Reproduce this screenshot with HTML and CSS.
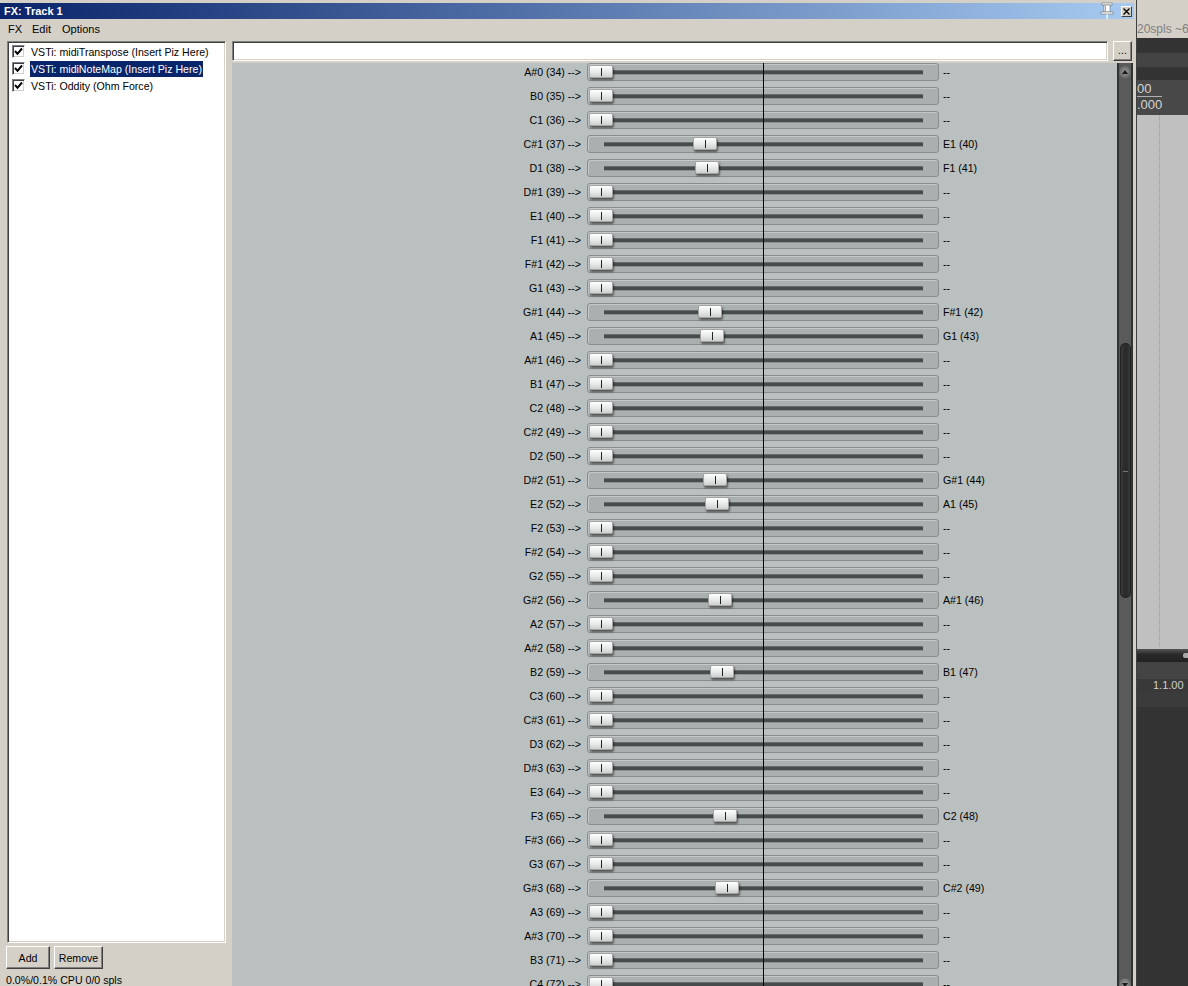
FILE: index.html
```html
<!DOCTYPE html>
<html>
<head>
<meta charset="utf-8">
<title>FX: Track 1</title>
<link rel="stylesheet" href="styles.css">
</head>
<body>
<div class="screen">
  <div class="window">
    <div class="titlebar">
      <span class="title">FX: Track 1</span>
      <svg class="pin" width="14" height="17" viewBox="0 0 14 17">
        <rect x="2" y="1" width="10" height="2" fill="#fff" stroke="#555" stroke-width="0.5"/>
        <rect x="4" y="3" width="6" height="7" fill="#fff" stroke="#555" stroke-width="0.5"/>
        <line x1="5.5" y1="3.5" x2="5.5" y2="9.5" stroke="#9ab" stroke-width="1"/>
        <rect x="1" y="10" width="12" height="2" fill="#fff" stroke="#555" stroke-width="0.5"/>
        <rect x="6.5" y="12" width="1.2" height="5" fill="#fff"/>
      </svg>
      <span class="closebtn">
        <svg width="7" height="7" viewBox="0 0 7 7"><path d="M0.5 0.5 L6.5 6.5 M6.5 0.5 L0.5 6.5" stroke="#000" stroke-width="1.3"/></svg>
      </span>
    </div>
    <div class="menubar">
      <span class="menu m-fx">FX</span>
      <span class="menu m-edit">Edit</span>
      <span class="menu">Options</span>
    </div>
    <div class="body">
      <div class="left">
        <div class="fxlist">
          <div class="fxitem"><span class="chk"><svg width="9" height="9" viewBox="0 0 9 9"><path d="M1 4 L3.5 6.8 L8 1.5" fill="none" stroke="#000" stroke-width="2"/></svg></span><span class="fxname">VSTi: midiTranspose (Insert Piz Here)</span></div>
          <div class="fxitem"><span class="chk"><svg width="9" height="9" viewBox="0 0 9 9"><path d="M1 4 L3.5 6.8 L8 1.5" fill="none" stroke="#000" stroke-width="2"/></svg></span><span class="fxname sel">VSTi: midiNoteMap (Insert Piz Here)</span></div>
          <div class="fxitem"><span class="chk"><svg width="9" height="9" viewBox="0 0 9 9"><path d="M1 4 L3.5 6.8 L8 1.5" fill="none" stroke="#000" stroke-width="2"/></svg></span><span class="fxname">VSTi: Oddity (Ohm Force)</span></div>
        </div>
        <div class="buttons">
          <span class="btn btn-add">Add</span>
          <span class="btn btn-remove">Remove</span>
        </div>
        <div class="status">0.0%/0.1% CPU 0/0 spls</div>
      </div>
      <div class="right">
        <div class="toprow">
          <div class="input"></div>
          <div class="dots">...</div>
        </div>
        <div class="pluginwrap">
          <div class="plugin">
            <div class="rows">
              <div class="row"><span class="lbl">A#0 (34) --&gt;</span><div class="slot"><div class="box"><div class="track"></div><div class="thumb" style="left:1px"></div></div></div><span class="out">--</span></div>
              <div class="row"><span class="lbl">B0 (35) --&gt;</span><div class="slot"><div class="box"><div class="track"></div><div class="thumb" style="left:1px"></div></div></div><span class="out">--</span></div>
              <div class="row"><span class="lbl">C1 (36) --&gt;</span><div class="slot"><div class="box"><div class="track"></div><div class="thumb" style="left:1px"></div></div></div><span class="out">--</span></div>
              <div class="row"><span class="lbl">C#1 (37) --&gt;</span><div class="slot"><div class="box"><div class="track"></div><div class="thumb" style="left:105px"></div></div></div><span class="out">E1 (40)</span></div>
              <div class="row"><span class="lbl">D1 (38) --&gt;</span><div class="slot"><div class="box"><div class="track"></div><div class="thumb" style="left:107px"></div></div></div><span class="out">F1 (41)</span></div>
              <div class="row"><span class="lbl">D#1 (39) --&gt;</span><div class="slot"><div class="box"><div class="track"></div><div class="thumb" style="left:1px"></div></div></div><span class="out">--</span></div>
              <div class="row"><span class="lbl">E1 (40) --&gt;</span><div class="slot"><div class="box"><div class="track"></div><div class="thumb" style="left:1px"></div></div></div><span class="out">--</span></div>
              <div class="row"><span class="lbl">F1 (41) --&gt;</span><div class="slot"><div class="box"><div class="track"></div><div class="thumb" style="left:1px"></div></div></div><span class="out">--</span></div>
              <div class="row"><span class="lbl">F#1 (42) --&gt;</span><div class="slot"><div class="box"><div class="track"></div><div class="thumb" style="left:1px"></div></div></div><span class="out">--</span></div>
              <div class="row"><span class="lbl">G1 (43) --&gt;</span><div class="slot"><div class="box"><div class="track"></div><div class="thumb" style="left:1px"></div></div></div><span class="out">--</span></div>
              <div class="row"><span class="lbl">G#1 (44) --&gt;</span><div class="slot"><div class="box"><div class="track"></div><div class="thumb" style="left:110px"></div></div></div><span class="out">F#1 (42)</span></div>
              <div class="row"><span class="lbl">A1 (45) --&gt;</span><div class="slot"><div class="box"><div class="track"></div><div class="thumb" style="left:112px"></div></div></div><span class="out">G1 (43)</span></div>
              <div class="row"><span class="lbl">A#1 (46) --&gt;</span><div class="slot"><div class="box"><div class="track"></div><div class="thumb" style="left:1px"></div></div></div><span class="out">--</span></div>
              <div class="row"><span class="lbl">B1 (47) --&gt;</span><div class="slot"><div class="box"><div class="track"></div><div class="thumb" style="left:1px"></div></div></div><span class="out">--</span></div>
              <div class="row"><span class="lbl">C2 (48) --&gt;</span><div class="slot"><div class="box"><div class="track"></div><div class="thumb" style="left:1px"></div></div></div><span class="out">--</span></div>
              <div class="row"><span class="lbl">C#2 (49) --&gt;</span><div class="slot"><div class="box"><div class="track"></div><div class="thumb" style="left:1px"></div></div></div><span class="out">--</span></div>
              <div class="row"><span class="lbl">D2 (50) --&gt;</span><div class="slot"><div class="box"><div class="track"></div><div class="thumb" style="left:1px"></div></div></div><span class="out">--</span></div>
              <div class="row"><span class="lbl">D#2 (51) --&gt;</span><div class="slot"><div class="box"><div class="track"></div><div class="thumb" style="left:115px"></div></div></div><span class="out">G#1 (44)</span></div>
              <div class="row"><span class="lbl">E2 (52) --&gt;</span><div class="slot"><div class="box"><div class="track"></div><div class="thumb" style="left:117px"></div></div></div><span class="out">A1 (45)</span></div>
              <div class="row"><span class="lbl">F2 (53) --&gt;</span><div class="slot"><div class="box"><div class="track"></div><div class="thumb" style="left:1px"></div></div></div><span class="out">--</span></div>
              <div class="row"><span class="lbl">F#2 (54) --&gt;</span><div class="slot"><div class="box"><div class="track"></div><div class="thumb" style="left:1px"></div></div></div><span class="out">--</span></div>
              <div class="row"><span class="lbl">G2 (55) --&gt;</span><div class="slot"><div class="box"><div class="track"></div><div class="thumb" style="left:1px"></div></div></div><span class="out">--</span></div>
              <div class="row"><span class="lbl">G#2 (56) --&gt;</span><div class="slot"><div class="box"><div class="track"></div><div class="thumb" style="left:120px"></div></div></div><span class="out">A#1 (46)</span></div>
              <div class="row"><span class="lbl">A2 (57) --&gt;</span><div class="slot"><div class="box"><div class="track"></div><div class="thumb" style="left:1px"></div></div></div><span class="out">--</span></div>
              <div class="row"><span class="lbl">A#2 (58) --&gt;</span><div class="slot"><div class="box"><div class="track"></div><div class="thumb" style="left:1px"></div></div></div><span class="out">--</span></div>
              <div class="row"><span class="lbl">B2 (59) --&gt;</span><div class="slot"><div class="box"><div class="track"></div><div class="thumb" style="left:122px"></div></div></div><span class="out">B1 (47)</span></div>
              <div class="row"><span class="lbl">C3 (60) --&gt;</span><div class="slot"><div class="box"><div class="track"></div><div class="thumb" style="left:1px"></div></div></div><span class="out">--</span></div>
              <div class="row"><span class="lbl">C#3 (61) --&gt;</span><div class="slot"><div class="box"><div class="track"></div><div class="thumb" style="left:1px"></div></div></div><span class="out">--</span></div>
              <div class="row"><span class="lbl">D3 (62) --&gt;</span><div class="slot"><div class="box"><div class="track"></div><div class="thumb" style="left:1px"></div></div></div><span class="out">--</span></div>
              <div class="row"><span class="lbl">D#3 (63) --&gt;</span><div class="slot"><div class="box"><div class="track"></div><div class="thumb" style="left:1px"></div></div></div><span class="out">--</span></div>
              <div class="row"><span class="lbl">E3 (64) --&gt;</span><div class="slot"><div class="box"><div class="track"></div><div class="thumb" style="left:1px"></div></div></div><span class="out">--</span></div>
              <div class="row"><span class="lbl">F3 (65) --&gt;</span><div class="slot"><div class="box"><div class="track"></div><div class="thumb" style="left:125px"></div></div></div><span class="out">C2 (48)</span></div>
              <div class="row"><span class="lbl">F#3 (66) --&gt;</span><div class="slot"><div class="box"><div class="track"></div><div class="thumb" style="left:1px"></div></div></div><span class="out">--</span></div>
              <div class="row"><span class="lbl">G3 (67) --&gt;</span><div class="slot"><div class="box"><div class="track"></div><div class="thumb" style="left:1px"></div></div></div><span class="out">--</span></div>
              <div class="row"><span class="lbl">G#3 (68) --&gt;</span><div class="slot"><div class="box"><div class="track"></div><div class="thumb" style="left:127px"></div></div></div><span class="out">C#2 (49)</span></div>
              <div class="row"><span class="lbl">A3 (69) --&gt;</span><div class="slot"><div class="box"><div class="track"></div><div class="thumb" style="left:1px"></div></div></div><span class="out">--</span></div>
              <div class="row"><span class="lbl">A#3 (70) --&gt;</span><div class="slot"><div class="box"><div class="track"></div><div class="thumb" style="left:1px"></div></div></div><span class="out">--</span></div>
              <div class="row"><span class="lbl">B3 (71) --&gt;</span><div class="slot"><div class="box"><div class="track"></div><div class="thumb" style="left:1px"></div></div></div><span class="out">--</span></div>
              <div class="row"><span class="lbl">C4 (72) --&gt;</span><div class="slot"><div class="box"><div class="track"></div><div class="thumb" style="left:1px"></div></div></div><span class="out">--</span></div>
            </div>
          </div>
          <div class="scrollbar">
            <span class="sb-btn sb-up"></span>
            <span class="sb-thumb"></span>
            <span class="sb-btn sb-down"></span>
          </div>
        </div>
      </div>
    </div>
  </div>
  <div class="arrange">
    <div class="a-top">20spls ~6.</div>
    <div class="a-band a-b1"></div>
    <div class="a-band a-b2"></div>
    <div class="a-band a-b3"></div>
    <div class="a-time">
      <span class="a-t1">00</span>
      <span class="a-t2">.000</span>
    </div>
    <div class="a-lane"></div>
    <div class="a-hbar"><span class="a-knob"></span></div>
    <div class="a-band a-b4"></div>
    <div class="a-pos">1.1.00</div>
    <div class="a-band a-b5"></div>
    <div class="a-rest"></div>
  </div>
</div>
</body>
</html>
```

FILE: styles.css
```css
* { box-sizing: border-box; }
html, body { margin: 0; padding: 0; }
body {
  width: 1188px;
  height: 986px;
  overflow: hidden;
  font-family: "Liberation Sans", Arial, sans-serif;
  font-size: 10.6px;
  color: #000;
  background: #333;
}
.screen { display: flex; width: 1188px; height: 986px; overflow: hidden; }

/* window */
.window {
  width: 1137px;
  height: 986px;
  flex-shrink: 0;
  background: #d4d0c8;
  border-right: 1px solid #404040;
  padding: 3px 3px 0 0;
  display: flex;
  flex-direction: column;
}
.titlebar {
  height: 16px;
  margin-right: -1px;
  flex-shrink: 0;
  background: linear-gradient(to right, #0a246a, #a6caf0);
  display: flex;
  align-items: center;
  padding-left: 4px;
  color: #fff;
  font-weight: bold;
  font-size: 11px;
}
.title { flex: 1; }
.pin { margin-right: 7px; margin-top: -1px; }
.closebtn {
  width: 11px;
  height: 11px;
  margin-right: 2px;
  background: #d4d0c8;
  border: 1px solid;
  border-color: #fff #404040 #404040 #fff;
  display: flex;
  align-items: center;
  justify-content: center;
}
.menubar {
  height: 20px;
  flex-shrink: 0;
  display: flex;
  align-items: center;
  padding-left: 8px;
  font-size: 11px;
}
.menu { display: inline-block; }
.m-fx { width: 24px; }
.m-edit { width: 30px; }

.body { flex: 1; display: flex; min-height: 0; }

/* left */
.left { width: 232px; flex-shrink: 0; display: flex; flex-direction: column; padding-top: 2px; }
.fxlist {
  margin-left: 7px;
  width: 219px;
  height: 902px;
  background: #fff;
  border: 1px solid;
  border-color: #808080 #fff #fff #808080;
  box-shadow: inset 1px 1px 0 #404040, inset -1px -1px 0 #d4d0c8;
  padding: 1px 0 0 4px;
}
.fxitem { height: 17px; display: flex; align-items: center; }
.chk {
  width: 13px;
  height: 13px;
  background: #fff;
  border: 1px solid;
  border-color: #808080 #fff #fff #808080;
  box-shadow: inset 1px 1px 0 #404040, inset -1px -1px 0 #d4d0c8;
  display: flex;
  align-items: center;
  justify-content: center;
  margin-right: 5px;
  flex-shrink: 0;
}
.fxname { padding: 0 1px; line-height: 16px; white-space: nowrap; }
.fxname.sel { background: #0a246a; color: #fff; }

.buttons { display: flex; gap: 4px; padding-left: 6px; margin-top: 3px; }
.btn {
  height: 23px;
  display: flex;
  align-items: center;
  justify-content: center;
  background: #d4d0c8;
  border: 1px solid;
  border-color: #fff #404040 #404040 #fff;
  box-shadow: inset -1px -1px 0 #808080;
}
.btn-add { width: 44px; }
.btn-remove { width: 49px; }
.status { padding-left: 6px; margin-top: 5px; white-space: nowrap; }

/* right */
.right { width: 901px; flex-shrink: 0; display: flex; flex-direction: column; padding-top: 2px; }
.toprow { height: 20px; display: flex; gap: 5px; flex-shrink: 0; }
.input {
  width: 876px;
  height: 20px;
  background: #fff;
  border: 1px solid;
  border-color: #808080 #fff #fff #808080;
  box-shadow: inset 1px 1px 0 #404040, inset -1px -1px 0 #d4d0c8;
}
.dots {
  width: 19px;
  height: 20px;
  background: #d4d0c8;
  border: 1px solid;
  border-color: #fff #404040 #404040 #fff;
  box-shadow: inset -1px -1px 0 #808080;
  display: flex;
  align-items: center;
  justify-content: center;
  padding-bottom: 2px;
}
.pluginwrap { margin-top: 2px; flex: 1; min-height: 0; display: flex; }
.plugin { width: 885px; height: 100%; background: #b9c0bf; overflow: hidden; }
.rows { margin-top: -3px; }
.row { height: 24px; display: flex; align-items: center; }
.lbl { width: 349px; text-align: right; white-space: nowrap; }
.slot { position: relative; width: 352px; height: 24px; margin-left: 6px; padding: 3px 0; }
.slot::after {
  content: "";
  position: absolute;
  left: 176px;
  top: 0;
  bottom: 0;
  width: 1px;
  background: #000;
  z-index: 1;
}
.box {
  position: relative;
  height: 18px;
  border: 1px solid #878d8c;
  border-radius: 3px;
  background: #aab0af;
  box-shadow: inset 1px 1px 0 #c3c9c8;
}
.track {
  position: absolute;
  left: 16px;
  width: 319px;
  top: 6px;
  height: 5px;
  background: #474b4b;
  border-top: 1px solid #686d6d;
  border-bottom: 1px solid #8e9493;
  border-radius: 1px;
}
.thumb {
  position: absolute;
  top: 1px;
  width: 24px;
  height: 13px;
  background: linear-gradient(#fdfdfd, #e8e8e8 55%, #cfcfcf);
  border: 1px solid #a3a3a3;
  border-radius: 2px;
  box-shadow: 1px 2px 2px rgba(0, 0, 0, 0.5);
  z-index: 2;
}
.thumb::before {
  content: "";
  position: absolute;
  left: 11px;
  top: 2px;
  width: 1px;
  height: 8px;
  background: #222;
}
.out { margin-left: 4px; white-space: nowrap; }

/* scrollbar */
.scrollbar {
  width: 16px;
  height: 100%;
  background: #5a5a5a;
  border-left: 2px solid #2f3232;
  border-right: 2px solid #333;
  display: flex;
  flex-direction: column;
  align-items: center;
  overflow: hidden;
}
.sb-btn {
  flex-shrink: 0;
  width: 12px;
  height: 13px;
  border-radius: 50%;
  background: radial-gradient(circle at 50% 45%, #9a9a9a, #6c6c6c 60%, #3c3c3c);
  position: relative;
}
.sb-btn::before {
  content: "";
  position: absolute;
  left: 3px;
  border-left: 3px solid transparent;
  border-right: 3px solid transparent;
}
.sb-up { margin-top: 3px; }
.sb-up::before { top: 4px; border-bottom: 4px solid #1a1a1a; }
.sb-down { margin-top: 380px; }
.sb-down::before { top: 5px; border-top: 4px solid #1a1a1a; }
.sb-thumb {
  flex-shrink: 0;
  margin-top: 264px;
  width: 11px;
  height: 255px;
  border-radius: 5px;
  background: linear-gradient(to right, #3a3a3a, #2b2b2b 40%, #2b2b2b 70%, #3a3a3a);
  border: 1px solid #222;
  position: relative;
}
.sb-thumb::after {
  content: "";
  position: absolute;
  left: 2px;
  width: 5px;
  top: 127px;
  height: 1px;
  background: #777;
}

/* arrange area */
.arrange { flex: 1; display: flex; flex-direction: column; overflow: hidden; }
.a-top {
  height: 38px;
  flex-shrink: 0;
  background: #d4d0c8;
  color: #808080;
  font-size: 12px;
  padding-top: 22px;
  white-space: nowrap;
  line-height: 14px;
}
.a-band { flex-shrink: 0; }
.a-b1 { height: 15px; background: #333; }
.a-b2 { height: 14px; background: #444; }
.a-b3 { height: 13px; background: #333; }
.a-time {
  height: 35px;
  flex-shrink: 0;
  background: #484848;
  color: #d4d4d4;
  font-size: 13px;
  display: flex;
  flex-direction: column;
  padding-top: 2px;
}
.a-t1 { width: 25px; line-height: 13px; border-bottom: 1px solid #b0b0b0; padding-bottom: 1px; }
.a-t2 { line-height: 13px; margin-top: 1px; }
.a-lane {
  height: 534px;
  flex-shrink: 0;
  background: #c0c0c0;
  position: relative;
}
.a-lane::before {
  content: "";
  position: absolute;
  left: 22px;
  top: 0;
  bottom: 3px;
  border-left: 1px dotted #9a9a9a;
}
.a-hbar {
  height: 13px;
  flex-shrink: 0;
  background: linear-gradient(#555, #2a2a2a 40%, #222);
  position: relative;
}
.a-knob {
  position: absolute;
  right: 0;
  top: 4px;
  width: 5px;
  height: 5px;
  border-radius: 2px 0 0 2px;
  background: #aaa;
}
.a-b4 { height: 17px; background: #444; }
.a-pos {
  height: 13px;
  flex-shrink: 0;
  background: #393939;
  color: #cfcfcf;
  font-size: 11px;
  line-height: 13px;
  padding-left: 16px;
  white-space: nowrap;
}
.a-b5 { height: 15px; background: #3b3b3b; }
.a-rest { flex: 1; background: #333; }
```
